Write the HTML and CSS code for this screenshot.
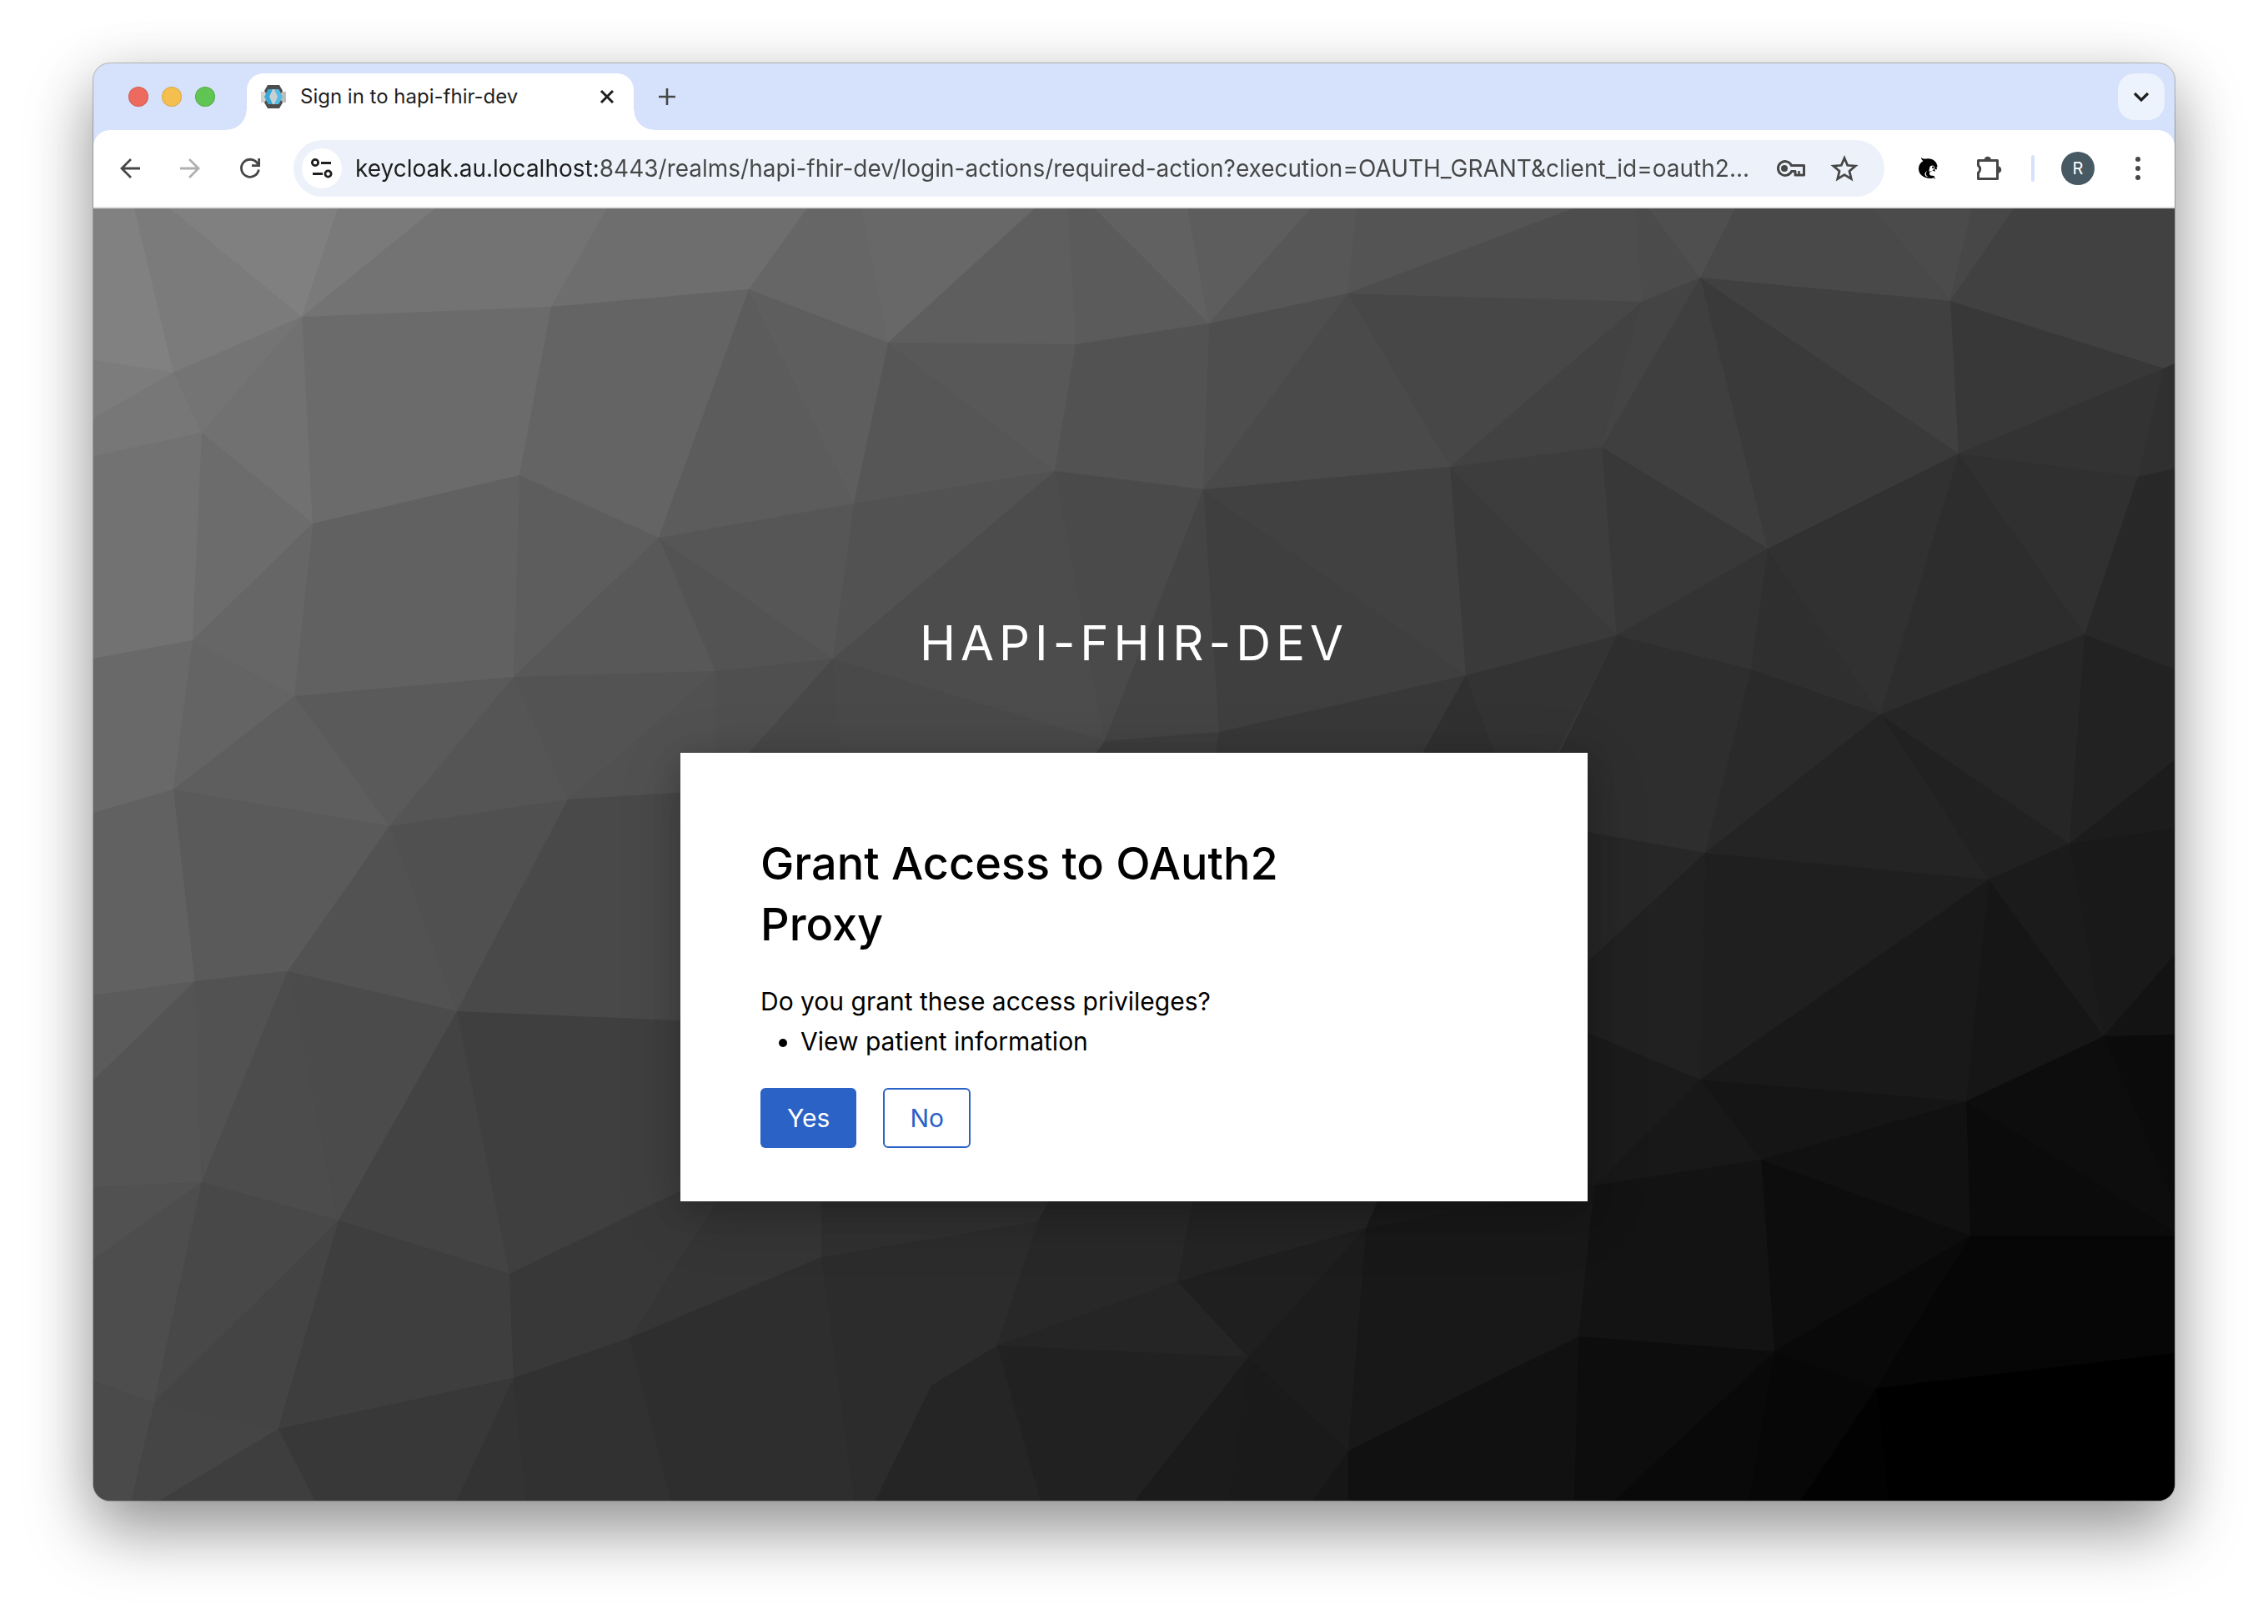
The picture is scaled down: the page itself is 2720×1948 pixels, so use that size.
FILE: index.html
```html
<!DOCTYPE html>
<html lang="en">
<head>
<meta charset="utf-8">
<meta name="viewport" content="width=device-width, initial-scale=1">
<title>Sign in to hapi-fhir-dev</title>
<link rel="stylesheet" href="styles.css">
</head>
<body>
<div class="window">
  <header class="tabstrip">
    <div class="lights">
      <button class="light light-close" aria-label="Close window"></button>
      <button class="light light-min" aria-label="Minimise window"></button>
      <button class="light light-max" aria-label="Zoom window"></button>
    </div>
    <div class="tab">
      <svg class="favicon" viewBox="0 0 32 32" aria-hidden="true">
        <path d="M1 10h30v13H1z" fill="#d2d2d2"/>
        <path d="M22 10h9v13h-9z" fill="#bdbdbd"/>
        <path d="M9 2h14l4 7-2 3H7l-2-3z" fill="#4d4d4d"/>
        <path d="M9 30h14l4-7-2-3H7l-2 3z" fill="#4d4d4d"/>
        <path d="M10 7h12l5 9-5 9H10l-5-9z" fill="#c9d0d3"/>
        <path d="M10 7h5l-4 9 4 9h-5l-5-9z" fill="#38a8d4"/>
        <path d="M22 7h-5l4 9-4 9h5l5-9z" fill="#55bce4"/>
      </svg>
      <span class="tab-title">Sign in to hapi-fhir-dev</span>
      <button class="icon-btn tab-close" aria-label="Close tab">
        <svg width="24" height="24" viewBox="0 0 24 24" fill="none" stroke="#1f1f1f" stroke-width="3"><path d="M5 5l14 14M19 5L5 19"/></svg>
      </button>
    </div>
    <button class="icon-btn new-tab" aria-label="New tab">
      <svg width="24" height="24" viewBox="0 0 24 24" fill="none" stroke="#474747" stroke-width="2.6"><path d="M12 2v20M2 12h20"/></svg>
    </button>
    <button class="icon-btn tab-search" aria-label="Search tabs">
      <svg width="24" height="24" viewBox="0 0 24 24" fill="none" stroke="#1f1f1f" stroke-width="3.2"><path d="M4 8l8 8 8-8"/></svg>
    </button>
  </header>

  <nav class="toolbar">
    <button class="icon-btn" aria-label="Back">
      <svg width="32" height="32" viewBox="0 0 32 32" fill="none" stroke="#474747" stroke-width="2.8"><path d="M28 16H6M17 5L6 16l11 11"/></svg>
    </button>
    <button class="icon-btn" aria-label="Forward" disabled>
      <svg width="32" height="32" viewBox="0 0 32 32" fill="none" stroke="#b0b0b0" stroke-width="2.8"><path d="M4 16h22M15 5l11 11-11 11"/></svg>
    </button>
    <button class="icon-btn reload" aria-label="Reload">
      <svg width="32" height="32" viewBox="0 0 32 32" fill="none" stroke="#474747" stroke-width="2.8"><path d="M26.3 17.5A10.5 10.5 0 1 1 24.6 9.8L26 12"/><path d="M26.6 4v8.6H18"/></svg>
    </button>
    <div class="omnibox">
      <button class="icon-btn site-info" aria-label="View site information">
        <svg width="32" height="32" viewBox="0 0 32 32" fill="none" stroke="#1f1f1f" stroke-width="2.8"><circle cx="8" cy="9" r="3.6"/><path d="M15 9.500h12M5 22.500h12"/><circle cx="23.500" cy="22.500" r="3.600"/></svg>
      </button>
      <input class="url" type="text" aria-label="Address and search bar" value="keycloak.au.localhost:8443/realms/hapi-fhir-dev/login-actions/required-action?execution=OAUTH_GRANT&amp;client_id=oauth2...">
      <button class="icon-btn" aria-label="Manage passwords">
        <svg width="40" height="32" viewBox="0 0 40 32" fill="none" stroke="#474747" stroke-width="3"><path d="M22.500 12.500A8.400 8.400 0 1 0 22.500 19.500H27V24h10.500V12.500z" stroke-linejoin="round"/><circle cx="14" cy="16" r="4" fill="#474747" stroke="none"/><path d="M31.500 24v-5" stroke-width="2.600"/></svg>
      </button>
      <button class="icon-btn" aria-label="Bookmark this tab">
        <svg width="36" height="36" viewBox="0 0 36 36" fill="none" stroke="#474747" stroke-width="2.800"><path d="M18 5.500l3.700 8.800 9.500.8-7.200 6.200 2.200 9.300-8.200-5-8.200 5L12 21.300l-7.200-6.200 9.500-.8z"/></svg>
      </button>
    </div>
    <div class="extensions">
      <button class="icon-btn" aria-label="Extension">
        <svg width="28" height="28" viewBox="0 0 28 28" aria-hidden="true">
          <path d="M6 1c2 2 5 1.500 8 1.300C20 2 25 6 25.600 12l-1.200.8.800 2.400-3-.4.600 3-3.300-1.200-3 1.800c-1 1.200-.6 3.200.9 4l4.100.6 1.500 4-2-1.800-2.500.8C9 26.500 3 21 3 14.500 3 10.500 5 7 8.500 5 7 4 6 2.500 6 1z" fill="#000"/>
          <path d="M16 14.500c0-2.500 1.500-4 3.400-4s3 1.400 3 3.200l-2.800 3-4.400 1z" fill="#fff"/>
          <circle cx="20.200" cy="12.800" r="1.200" fill="#000"/>
          <path d="M13.500 17c-2.600 2.200-2.200 6 1.400 7.400-5-.2-6.200-5.400-1.400-7.400z" fill="#fff"/>
        </svg>
      </button>
      <button class="icon-btn" aria-label="Extensions">
        <svg width="36" height="36" viewBox="0 0 36 36"><path d="M6.500 8.500h23v22h-23v-7.200a5.500 5.500 0 0 0 0-8.800z" fill="none" stroke="#474747" stroke-width="3" stroke-linejoin="round"/><path d="M13.500 8a4.300 4.300 0 0 1 8.600 0zM30 15.200a4.300 4.300 0 0 1 0 8.600z" fill="#474747"/></svg>
      </button>
    </div>
    <span class="divider"></span>
    <button class="avatar" aria-label="Profile">R</button>
    <button class="icon-btn menu" aria-label="Menu">
      <svg width="32" height="32" viewBox="0 0 32 32" fill="#474747"><circle cx="16" cy="5" r="3"/><circle cx="16" cy="16" r="3"/><circle cx="16" cy="27" r="3"/></svg>
    </button>
  </nav>

  <main class="page">
    <svg class="backdrop" viewBox="112 250 2496 1550" preserveAspectRatio="xMidYMid slice" aria-hidden="true">
      <path fill="#818181" d="M112 250H161L208 447 112 432z"/>
      <path fill="#7b7b7b" d="M161 250H204L362 380 208 447z"/>
      <path fill="#808080" d="M204 250H405L362 380z"/>
      <path fill="#7a7a7a" d="M405 250H522L362 380z"/>
      <path fill="#737373" d="M522 250H728L661 368 362 380z"/>
      <path fill="#6e6e6e" d="M728 250H968L898 347 661 368z"/>
      <path fill="#666" d="M968 250H1033L1065 411 898 347z"/>
      <path fill="#686868" d="M1033 250H1241L1065 411z"/>
      <path fill="#5e5e5e" d="M1241 250H1281L1290 413 1065 411z"/>
      <path fill="#5b5b5b" d="M1281 250H1313L1450 388 1290 413z"/>
      <path fill="#616161" d="M1313 250H1424L1450 388z"/>
      <path fill="#5d5d5d" d="M1424 250H1572L1450 388z"/>
      <path fill="#575757" d="M1572 250H1627L1616 352 1450 388z"/>
      <path fill="#545454" d="M1627 250H1887L1616 352z"/>
      <path fill="#4d4d4d" d="M1887 250H1962L1969 362 1616 352z"/>
      <path fill="#4b4b4b" d="M1962 250H1977L2039 333 1969 362z"/>
      <path fill="#4f4f4f" d="M1977 250H2081L2039 333z"/>
      <path fill="#494949" d="M2081 250H2246L2339 361 2039 333z"/>
      <path fill="#4b4b4b" d="M2246 250H2365L2339 361z"/>
      <path fill="#474747" d="M2365 250H2415L2339 361z"/>
      <path fill="#414141" d="M2415 250H2608V436L2595 442 2339 361z"/>
      <path fill="#7c7c7c" d="M112 432L208 447 112 502z"/>
      <path fill="#777" d="M112 502L208 447 242 519 112 547z"/>
      <path fill="#747474" d="M208 447L362 380 242 519z"/>
      <path fill="#717171" d="M362 380L375 628 242 519z"/>
      <path fill="#727272" d="M112 547L242 519 231 768 112 790z"/>
      <path fill="#6c6c6c" d="M242 519L375 628 231 768z"/>
      <path fill="#6b6b6b" d="M362 380L661 368 623 570 375 628z"/>
      <path fill="#646464" d="M661 368L898 347 790 645 623 570z"/>
      <path fill="#5c5c5c" d="M898 347L1024 604 790 645z"/>
      <path fill="#5e5e5e" d="M898 347L1065 411 1024 604z"/>
      <path fill="#616161" d="M375 628L623 570 616 812 353 835z"/>
      <path fill="#666" d="M231 768L375 628 353 835z"/>
      <path fill="#696969" d="M112 790L231 768 208 947 112 975z"/>
      <path fill="#646464" d="M231 768L353 835 208 947z"/>
      <path fill="#5d5d5d" d="M623 570L790 645 616 812z"/>
      <path fill="#585858" d="M790 645L858 805 616 812z"/>
      <path fill="#535353" d="M790 645L999 790 858 805z"/>
      <path fill="#565656" d="M790 645L1024 604 999 790z"/>
      <path fill="#5a5a5a" d="M353 835L616 812 467 991z"/>
      <path fill="#5e5e5e" d="M208 947L353 835 467 991z"/>
      <path fill="#555" d="M616 812L681 959 467 991z"/>
      <path fill="#535353" d="M616 812L858 805 681 959z"/>
      <path fill="#515151" d="M858 805V948L681 959z"/>
      <path fill="#4f4f4f" d="M858 805L999 790 858 948z"/>
      <path fill="#484848" d="M999 790L1014 950 858 1228V948z"/>
      <path fill="#494949" d="M999 790L1325 889 1280 950H1014z"/>
      <path fill="#565656" d="M1065 411L1265 565 1024 604z"/>
      <path fill="#585858" d="M1065 411L1290 413 1265 565z"/>
      <path fill="#525252" d="M1024 604L1265 565 999 790z"/>
      <path fill="#525252" d="M1290 413L1450 388 1443 587 1265 565z"/>
      <path fill="#4e4e4e" d="M1450 388L1616 352 1443 587z"/>
      <path fill="#4a4a4a" d="M1616 352L1739 560 1443 587z"/>
      <path fill="#4c4c4c" d="M1265 565L1325 889 999 790z"/>
      <path fill="#4a4a4a" d="M1265 565L1443 587 1325 889z"/>
      <path fill="#444" d="M1443 587L1462 878 1325 889z"/>
      <path fill="#3f3f3f" d="M1443 587L1758 810 1462 878z"/>
      <path fill="#414141" d="M1443 587L1739 560 1758 810z"/>
      <path fill="#3d3d3d" d="M1325 889L1462 878 1450 950H1280z"/>
      <path fill="#383838" d="M1462 878L1758 810 1680 950H1450z"/>
      <path fill="#303030" d="M1758 810L1810 950H1680z"/>
      <path fill="#333" d="M1758 810L1939 762 1844 950H1810z"/>
      <path fill="#474747" d="M1616 352L1969 362 1739 560z"/>
      <path fill="#424242" d="M1969 362L1921 536 1739 560z"/>
      <path fill="#444" d="M1969 362L2039 333 1921 536z"/>
      <path fill="#3d3d3d" d="M1739 560L1921 536 1939 762z"/>
      <path fill="#3a3a3a" d="M1739 560L1939 762 1758 810z"/>
      <path fill="#3f3f3f" d="M2039 333L2120 658 1921 536z"/>
      <path fill="#3a3a3a" d="M2039 333L2349 544 2120 658z"/>
      <path fill="#404040" d="M2039 333L2339 361 2349 544z"/>
      <path fill="#383838" d="M2339 361L2595 442 2349 544z"/>
      <path fill="#333" d="M2349 544L2595 442 2564 572z"/>
      <path fill="#303030" d="M2595 442L2608 436V562L2564 572z"/>
      <path fill="#383838" d="M1921 536L2120 658 1939 762z"/>
      <path fill="#333" d="M2120 658L2100 803 1939 762z"/>
      <path fill="#2f2f2f" d="M2120 658L2255 857 2100 803z"/>
      <path fill="#313131" d="M2349 544L2255 857 2120 658z"/>
      <path fill="#2d2d2d" d="M2349 544L2500 761 2255 857z"/>
      <path fill="#303030" d="M2349 544L2564 572 2500 761z"/>
      <path fill="#282828" d="M2564 572L2608 562V803L2500 761z"/>
      <path fill="#2e2e2e" d="M1939 762L2100 803 2045 1023 1830 985z"/>
      <path fill="#2a2a2a" d="M2100 803L2255 857 2045 1023z"/>
      <path fill="#242424" d="M2255 857L2385 1055 2045 1023z"/>
      <path fill="#212121" d="M2255 857L2482 1012 2385 1055z"/>
      <path fill="#262626" d="M2255 857L2500 761 2482 1012z"/>
      <path fill="#222" d="M2500 761L2608 803V912L2482 1012z"/>
      <path fill="#1c1c1c" d="M2482 1012L2608 912V993z"/>
      <path fill="#272727" d="M1830 985L2045 1023 1830 1222z"/>
      <path fill="#212121" d="M2045 1023L2039 1295 1830 1208V1222z"/>
      <path fill="#1f1f1f" d="M2045 1023L2385 1055 2039 1295z"/>
      <path fill="#191919" d="M2385 1055L2358 1321 2039 1295z"/>
      <path fill="#161616" d="M2385 1055L2523 1243 2358 1321z"/>
      <path fill="#1b1b1b" d="M2482 1012L2523 1243 2385 1055z"/>
      <path fill="#191919" d="M2482 1012L2608 993V1145L2523 1243z"/>
      <path fill="#131313" d="M2523 1243L2608 1145V1241z"/>
      <path fill="#0b0b0b" d="M2523 1243L2608 1241V1444z"/>
      <path fill="#0d0d0d" d="M2358 1321L2523 1243 2608 1444V1478z"/>
      <path fill="#0b0b0b" d="M2358 1321L2608 1478V1482H2363z"/>
      <path fill="#1b1b1b" d="M1830 1208L2039 1295 1912 1422 1830 1436z"/>
      <path fill="#181818" d="M2039 1295L2112 1391 1912 1422z"/>
      <path fill="#151515" d="M2039 1295L2358 1321 2112 1391z"/>
      <path fill="#111" d="M2112 1391L2358 1321 2363 1482z"/>
      <path fill="#0d0d0d" d="M2112 1391L2363 1482 2128 1621z"/>
      <path fill="#131313" d="M1912 1422L2112 1391 2128 1621 1893 1603z"/>
      <path fill="#090909" d="M2128 1621L2363 1482 2250 1665z"/>
      <path fill="#060606" d="M2363 1482H2608V1623L2250 1665z"/>
      <path fill="#000" d="M2250 1665L2608 1623V1800H2265z"/>
      <path fill="#020202" d="M2250 1665L2265 1800H2159z"/>
      <path fill="#070707" d="M2128 1621L2250 1665 2159 1800H2097z"/>
      <path fill="#090909" d="M2128 1621L2097 1800H1936z"/>
      <path fill="#0d0d0d" d="M1893 1603L2128 1621 1936 1800H1888z"/>
      <path fill="#111" d="M1617 1740L1893 1603 1888 1800H1617z"/>
      <path fill="#161616" d="M1617 1740V1800H1575z"/>
      <path fill="#181818" d="M1638 1473L1912 1422 1893 1603 1617 1740z"/>
      <path fill="#1a1a1a" d="M1670 1400H1912V1422L1638 1473z"/>
      <path fill="#616161" d="M112 975L208 947 234 1177 112 1194z"/>
      <path fill="#5a5a5a" d="M208 947L467 991 345 1165 234 1177z"/>
      <path fill="#525252" d="M467 991L548 1213 345 1165z"/>
      <path fill="#505050" d="M467 991L681 959 548 1213z"/>
      <path fill="#494949" d="M681 959L858 948V1226L548 1213z"/>
      <path fill="#5b5b5b" d="M112 1194L234 1177 112 1296z"/>
      <path fill="#545454" d="M112 1296L234 1177 242 1418 112 1424z"/>
      <path fill="#525252" d="M234 1177L345 1165 242 1418z"/>
      <path fill="#4c4c4c" d="M345 1165L406 1464 242 1418z"/>
      <path fill="#4b4b4b" d="M345 1165L548 1213 406 1464z"/>
      <path fill="#434343" d="M548 1213L611 1528 406 1464z"/>
      <path fill="#3f3f3f" d="M548 1213L858 1226 900 1388 611 1528z"/>
      <path fill="#515151" d="M112 1424L242 1418 112 1511z"/>
      <path fill="#4d4d4d" d="M112 1511L242 1418 185 1683 112 1657z"/>
      <path fill="#484848" d="M242 1418L406 1464 185 1683z"/>
      <path fill="#444" d="M406 1464L334 1714 185 1683z"/>
      <path fill="#3e3e3e" d="M406 1464L611 1528 616 1653 334 1714z"/>
      <path fill="#383838" d="M611 1528L900 1388 755 1605 616 1653z"/>
      <path fill="#4a4a4a" d="M112 1657L185 1683 158 1800H112z"/>
      <path fill="#454545" d="M185 1683L334 1714 192 1800H158z"/>
      <path fill="#3e3e3e" d="M334 1714L378 1800H192z"/>
      <path fill="#383838" d="M334 1714L616 1653 548 1800H378z"/>
      <path fill="#333" d="M616 1653L631 1800H548z"/>
      <path fill="#313131" d="M616 1653L755 1605 805 1800H631z"/>
      <path fill="#353535" d="M755 1605L886 1400H985V1508z"/>
      <path fill="#2e2e2e" d="M755 1605L985 1508 1025 1800H805z"/>
      <path fill="#303030" d="M985 1508V1400H1280L1245 1465z"/>
      <path fill="#2c2c2c" d="M985 1508L1245 1465 1196 1614 1117 1662 1050 1800H1025z"/>
      <path fill="#282828" d="M1245 1465L1280 1400H1438L1412 1537 1196 1614z"/>
      <path fill="#242424" d="M1438 1400H1670L1638 1473 1412 1537z"/>
      <path fill="#252525" d="M1196 1614L1412 1537 1497 1628z"/>
      <path fill="#1f1f1f" d="M1412 1537L1638 1473 1497 1628z"/>
      <path fill="#252525" d="M1117 1662L1196 1614 1248 1800H1050z"/>
      <path fill="#212121" d="M1196 1614L1497 1628 1361 1800H1248z"/>
      <path fill="#1b1b1b" d="M1497 1628L1475 1800H1361z"/>
      <path fill="#1a1a1a" d="M1497 1628L1617 1740 1575 1800H1475z"/>
      <path fill="#1c1c1c" d="M1497 1628L1638 1473 1617 1740z"/>
    </svg>
    <div class="login">
      <h2 class="realm">HAPI-FHIR-DEV</h2>
      <section class="card">
        <h1 class="card-title">Grant Access to OAuth2 Proxy</h1>
        <p class="question">Do you grant these access privileges?</p>
        <ul class="scopes">
          <li>View patient information</li>
        </ul>
        <form class="actions">
          <button class="btn btn-primary" type="submit">Yes</button>
          <button class="btn btn-secondary" type="button">No</button>
        </form>
      </section>
    </div>
  </main>
</div>
</body>
</html>
```
FILE: styles.css
```css
* {
  box-sizing: border-box;
}

body {
  margin: 0;
  padding: 76px 112px 148px;
  min-height: 100vh;
  display: flex;
  background: #fff;
  font-family: Inter, "Liberation Sans", sans-serif;
}

button {
  font: inherit;
  border: 0;
  padding: 0;
  cursor: pointer;
}

/* Window frame */
.window {
  flex: 1;
  min-width: 0;
  display: flex;
  flex-direction: column;
  overflow: hidden;
  border-radius: 20px;
  background: #d6e1fb;
  box-shadow: 0 0 0 1px rgba(0, 0, 0, .24), 0 36px 80px rgba(0, 0, 0, .38), 0 12px 72px rgba(0, 0, 0, .1);
}

/* Tab strip */
.tabstrip {
  height: 80px;
  display: flex;
  align-items: center;
  padding: 0 12px 0 42px;
}

.lights {
  display: flex;
  gap: 16px;
  margin-right: 38px;
}

.light {
  width: 24px;
  height: 24px;
  border-radius: 50%;
  box-shadow: inset 0 0 0 1px rgba(0, 0, 0, .12);
}

.light-close { background: #ed6a5e; }
.light-min { background: #f5bf4f; }
.light-max { background: #61c554; }

.tab {
  position: relative;
  align-self: flex-end;
  width: 464px;
  height: 68px;
  display: flex;
  align-items: center;
  padding: 0 20px 12px 16px;
  background: #fff;
  border-radius: 20px 20px 0 0;
}

.tab::before,
.tab::after {
  content: "";
  position: absolute;
  bottom: 0;
  width: 24px;
  height: 24px;
}

.tab::before {
  left: -24px;
  background: radial-gradient(circle at 0 0, transparent 23px, #fff 24px);
}

.tab::after {
  right: -24px;
  background: radial-gradient(circle at 100% 0, transparent 23px, #fff 24px);
}

.favicon {
  width: 32px;
  height: 32px;
}

.tab-title {
  flex: 1;
  margin-left: 16px;
  font-size: 24px;
  line-height: 32px;
  color: #1f1f1f;
  white-space: nowrap;
}

.icon-btn {
  display: inline-flex;
  align-items: center;
  justify-content: center;
  background: none;
}

.new-tab {
  margin-left: 28px;
}

.tab-search {
  width: 56px;
  height: 56px;
  margin-left: auto;
  border-radius: 20px;
  background: #ecf3fd;
}

/* Toolbar */
.toolbar {
  height: 94px;
  display: flex;
  align-items: center;
  padding: 0 28px;
  background: #fff;
  border-bottom: 2px solid #dfe1e4;
  border-radius: 20px 20px 0 0;
}

.toolbar > .icon-btn {
  margin-right: 40px;
}

.toolbar > .reload {
  margin-right: 36px;
}

.omnibox {
  flex: 1;
  min-width: 0;
  height: 68px;
  display: flex;
  align-items: center;
  gap: 28px;
  padding: 0 30px 0 10px;
  border-radius: 34px;
  background: #edf2fa;
}

.site-info {
  width: 48px;
  height: 48px;
  margin-right: -12px;
  border-radius: 50%;
  background: #fff;
}

.url {
  flex: 1;
  min-width: 0;
  height: 48px;
  border: 0;
  padding: 0;
  outline: 0;
  font: inherit;
  font-size: 28px;
  color: transparent;
  background: linear-gradient(to right, #1f1f1f 290px, #474747 290px);
  -webkit-background-clip: text;
  background-clip: text;
}

.extensions {
  display: flex;
  align-items: center;
  gap: 40px;
  margin: 0 34px 0 38px;
}

.divider {
  width: 4px;
  height: 32px;
  border-radius: 2px;
  background: #d6e1fb;
}

.avatar {
  width: 40px;
  height: 40px;
  margin: 0 36px 0 32px;
  border-radius: 50%;
  background: #475963;
  color: #fff;
  font-size: 20px;
}

.toolbar > .menu {
  margin-right: 0;
}

/* Login page */
.page {
  position: relative;
  flex: 1;
  background: linear-gradient(150deg, #858585, #404040 50%, #000);
}

.backdrop {
  position: absolute;
  inset: 0;
  width: 100%;
  height: 100%;
}

.login {
  position: relative;
  max-width: 1088px;
  margin: 0 auto;
  padding: 481px 0 120px;
}

.realm {
  margin: 0 0 92px;
  font-size: 58px;
  line-height: 80px;
  font-weight: 400;
  letter-spacing: 6px;
  text-align: center;
  color: #fff;
}

.card {
  padding: 96px 96px 64px;
  background: #fff;
  box-shadow: 0 16px 72px rgba(0, 0, 0, .16), 0 8px 32px rgba(0, 0, 0, .16);
  color: #000;
}

.card-title {
  max-width: 680px;
  margin: 0 0 32px;
  font-size: 54px;
  line-height: 73px;
  font-weight: 500;
}

.question,
.scopes {
  margin: 0;
  font-size: 30px;
  line-height: 48px;
}

.scopes {
  padding-left: 48px;
}

.actions {
  display: flex;
  gap: 32px;
  margin-top: 32px;
}

.btn {
  height: 72px;
  padding: 0 32px;
  border-radius: 6px;
  font-size: 30px;
  line-height: 48px;
}

.btn-primary {
  background: #2a62c6;
  color: #fff;
}

.btn-secondary {
  padding: 0 30px;
  background: #fff;
  color: #2a62c6;
  border: 2px solid #2a62c6;
}
```
